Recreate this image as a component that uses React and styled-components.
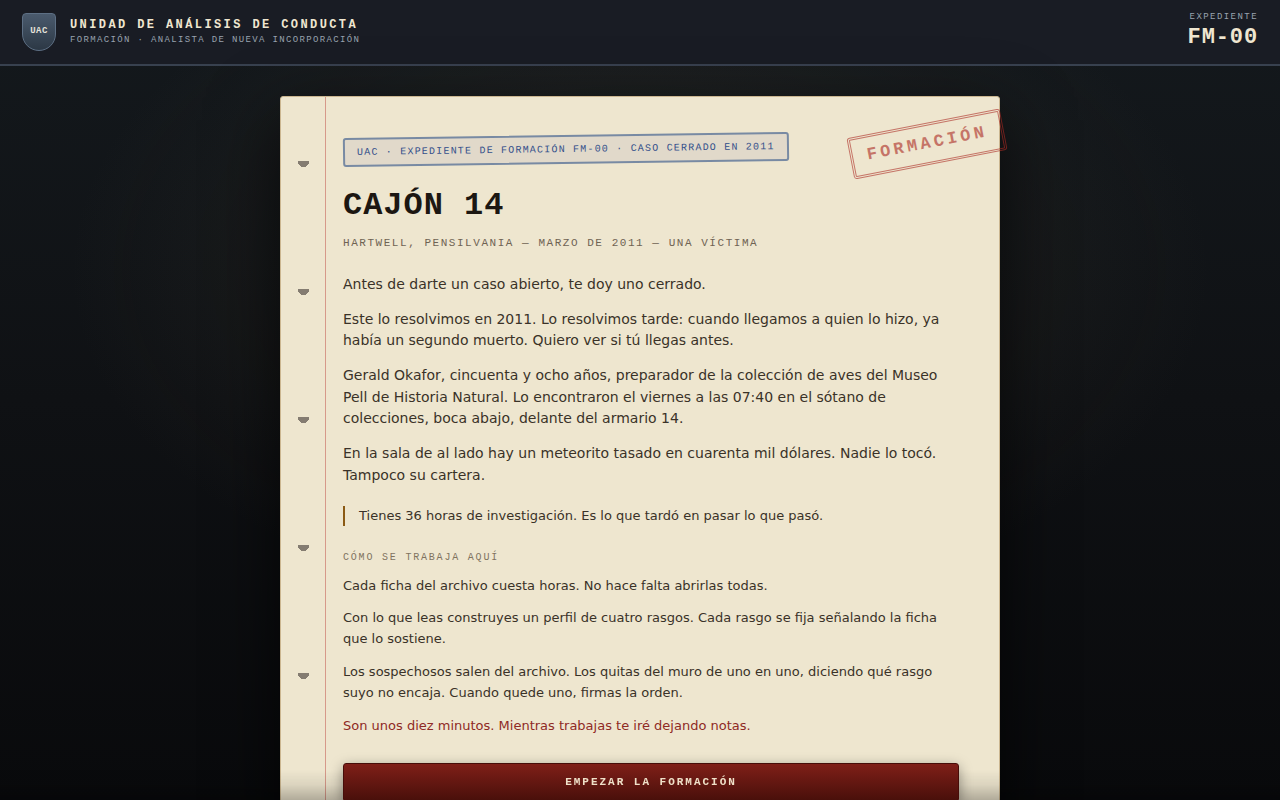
import React from "react";
import styled, { createGlobalStyle } from "styled-components";

const mono = `"Liberation Mono", "Courier New", monospace`;
const sans = `"DejaVu Sans", sans-serif`;

const GlobalStyle = createGlobalStyle`
  *, *::before, *::after { box-sizing: border-box; }
  body {
    margin: 0;
    color: #3a3228;
    background: #090a0d;
    font-family: ${sans};
    line-height: 1.55;
  }
  h1, h2, p { margin: 0; }
`;

const Page = styled.div`
  min-height: 100vh;
  background:
    radial-gradient(ellipse 570px 350px at 50% 270px, rgba(86, 78, 58, 0.28), transparent),
    linear-gradient(180deg, #14191d 0, #0f1114 400px, #090a0c 800px);
`;

const Header = styled.header`
  display: flex;
  align-items: center;
  justify-content: space-between;
  height: 66px;
  padding: 0 22px;
  background: #191c24;
  border-bottom: 2px solid #38414f;
`;

const Brand = styled.div`
  display: flex;
  align-items: center;
  gap: 14px;
`;

const Shield = styled.div`
  display: flex;
  align-items: center;
  justify-content: center;
  width: 34px;
  height: 38px;
  padding-bottom: 2px;
  border: 1px solid #5d6f84;
  border-radius: 4px 4px 17px 17px;
  background: linear-gradient(180deg, #4a5a6d, #2c3845);
  color: #e4e2da;
  font: bold 9px ${mono};
  letter-spacing: 0.05em;
`;

const BrandText = styled.div`
  display: flex;
  flex-direction: column;
`;

const BrandName = styled.div`
  color: #efe6d0;
  font: bold 12px/16px ${mono};
  letter-spacing: 0.2em;
`;

const Caption = styled.div`
  color: #98a2ae;
  font: 9px/14px ${mono};
  letter-spacing: ${(p) => p.$spacing || "0.15em"};
`;

const CaseFile = styled.div`
  padding-bottom: 3px;
  text-align: right;
`;

const CaseNumber = styled.div`
  color: #efe6d0;
  font: bold 22px/27px ${mono};
  letter-spacing: 0.04em;
`;

const Main = styled.main`
  padding: 30px 24px;
`;

const Sheet = styled.article`
  position: relative;
  display: flex;
  max-width: 720px;
  margin: 0 auto;
  border: 1px solid #cbb690;
  border-radius: 3px;
  background: #eee6cf;
  box-shadow: 0 24px 70px rgba(0, 0, 0, 0.7);
`;

const Binding = styled.div`
  flex: none;
  width: 45px;
  border-right: 1px solid #d6998a;
  background: radial-gradient(circle at 50% 0, #847c71 6px, transparent 6px) 17px 64px / 11px 128px
    repeat-y;
`;

const Content = styled.div`
  flex: 1;
  display: flex;
  flex-direction: column;
  padding: 38px 40px 40px 17px;
`;

const Tag = styled.div`
  align-self: flex-start;
  padding: 4px 12px;
  border: 2px solid #788aa3;
  border-radius: 3px;
  background: #e1d9ca;
  color: #34508a;
  font: 10px/17px ${mono};
  letter-spacing: 0.12em;
  transform: rotate(-0.8deg);
`;

const Stamp = styled.div`
  position: absolute;
  top: 26px;
  right: -6px;
  padding: 6px 14px;
  border: 3px double #ab2a23;
  border-radius: 3px;
  color: #ab2a23;
  font: bold 17px/24px ${mono};
  letter-spacing: 0.2em;
  opacity: 0.6;
  transform: rotate(-11deg);
`;

const Title = styled.h1`
  margin-top: 23px;
  color: #1c1712;
  font: bold 32px/38px ${mono};
  letter-spacing: 0.03em;
`;

const Place = styled.p`
  margin-top: 10px;
  color: #6f6353;
  font: 11px/17px ${mono};
  letter-spacing: 0.14em;
`;

const Story = styled.div`
  display: flex;
  flex-direction: column;
  gap: 13px;
  margin-top: 22px;
  font-size: 14px;
`;

const Instructions = styled.div`
  display: flex;
  flex-direction: column;
  gap: 12px;
  margin-top: 10px;
  font-size: 13px;
  line-height: 1.6;
`;

const Quote = styled.p`
  margin-top: 19px;
  padding-left: 14px;
  border-left: 2px solid #8b5a14;
  font-size: 13px;
`;

const Label = styled.h2`
  margin-top: 24px;
  color: #80735f;
  font: 10px/16px ${mono};
  letter-spacing: 0.18em;
`;

const Notice = styled.p`
  color: #8f2a25;
`;

const StartButton = styled.button`
  position: relative;
  z-index: 2;
  margin-top: 27px;
  padding: 10px;
  border: 1px solid #470d09;
  border-radius: 3px;
  background: linear-gradient(180deg, #7f1f18, #480f0a);
  box-shadow: 0 4px 14px rgba(0, 0, 0, 0.4);
  color: #efe0c8;
  font: bold 11px/17px ${mono};
  letter-spacing: 0.18em;
  cursor: pointer;
`;

const BottomFade = styled.div`
  position: fixed;
  z-index: 1;
  right: 0;
  bottom: 0;
  left: 0;
  height: 30px;
  background: linear-gradient(180deg, transparent, rgba(0, 0, 0, 0.08) 50%, rgba(0, 0, 0, 0.26));
  pointer-events: none;
`;

export default function App() {
  return (
    <Page>
      <GlobalStyle />
      <Header>
        <Brand>
          <Shield>UAC</Shield>
          <BrandText>
            <BrandName>UNIDAD DE ANÁLISIS DE CONDUCTA</BrandName>
            <Caption>FORMACIÓN · ANALISTA DE NUEVA INCORPORACIÓN</Caption>
          </BrandText>
        </Brand>
        <CaseFile>
          <Caption $spacing="0.16em">EXPEDIENTE</Caption>
          <CaseNumber>FM-00</CaseNumber>
        </CaseFile>
      </Header>
      <Main>
        <Sheet>
          <Binding />
          <Content>
            <Tag>UAC · EXPEDIENTE DE FORMACIÓN FM-00 · CASO CERRADO EN 2011</Tag>
            <Title>CAJÓN 14</Title>
            <Place>HARTWELL, PENSILVANIA — MARZO DE 2011 — UNA VÍCTIMA</Place>
            <Story>
              <p>Antes de darte un caso abierto, te doy uno cerrado.</p>
              <p>
                Este lo resolvimos en 2011. Lo resolvimos tarde: cuando llegamos a quien lo hizo, ya
                había un segundo muerto. Quiero ver si tú llegas antes.
              </p>
              <p>
                Gerald Okafor, cincuenta y ocho años, preparador de la colección de aves del Museo
                Pell de Historia Natural. Lo encontraron el viernes a las 07:40 en el sótano de
                colecciones, boca abajo, delante del armario 14.
              </p>
              <p>
                En la sala de al lado hay un meteorito tasado en cuarenta mil dólares. Nadie lo
                tocó. Tampoco su cartera.
              </p>
            </Story>
            <Quote>Tienes 36 horas de investigación. Es lo que tardó en pasar lo que pasó.</Quote>
            <Label>CÓMO SE TRABAJA AQUÍ</Label>
            <Instructions>
              <p>Cada ficha del archivo cuesta horas. No hace falta abrirlas todas.</p>
              <p>
                Con lo que leas construyes un perfil de cuatro rasgos. Cada rasgo se fija señalando
                la ficha que lo sostiene.
              </p>
              <p>
                Los sospechosos salen del archivo. Los quitas del muro de uno en uno, diciendo qué
                rasgo suyo no encaja. Cuando quede uno, firmas la orden.
              </p>
              <Notice>Son unos diez minutos. Mientras trabajas te iré dejando notas.</Notice>
            </Instructions>
            <StartButton type="button">EMPEZAR LA FORMACIÓN</StartButton>
          </Content>
          <Stamp>FORMACIÓN</Stamp>
        </Sheet>
      </Main>
      <BottomFade />
    </Page>
  );
}
